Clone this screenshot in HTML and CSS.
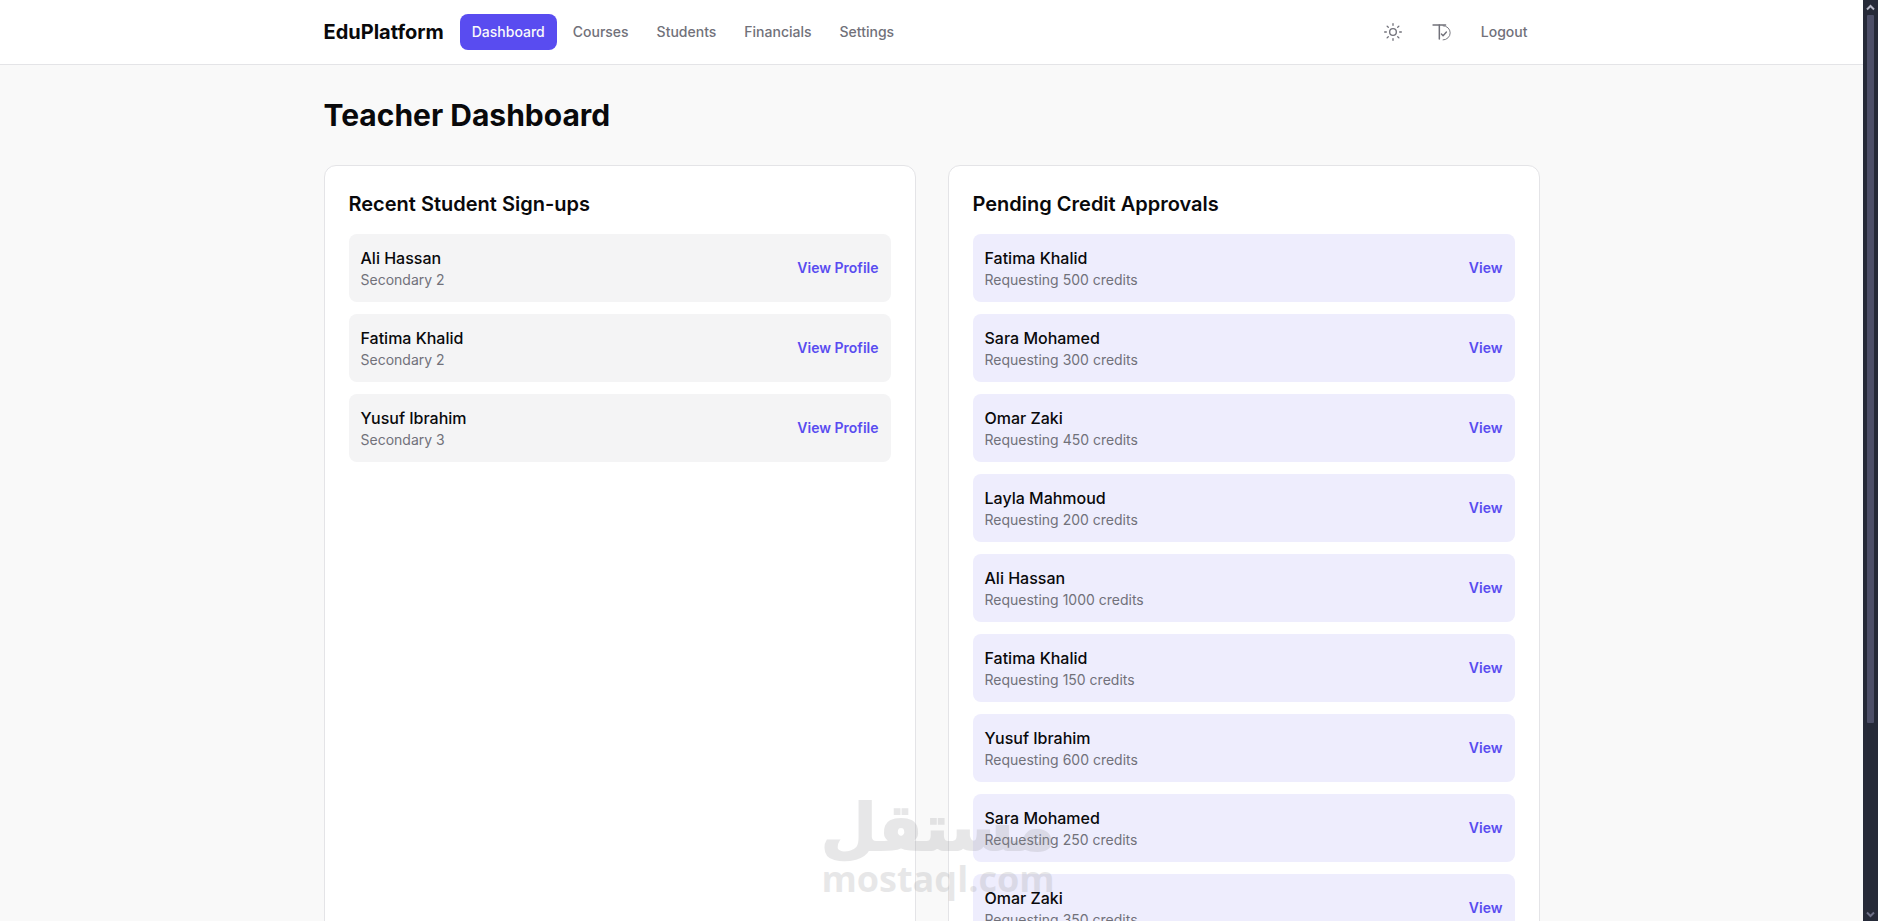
FILE: index.html
```html
<!DOCTYPE html>
<html lang="en">
<head>
<meta charset="utf-8">
<title>EduPlatform</title>
<link rel="stylesheet" href="styles.css">
</head>
<body>
<div class="viewport">
  <div class="page">
    <header class="nav">
      <div class="nav-inner">
        <div class="nav-left">
          <span class="logo">EduPlatform</span>
          <nav class="links">
            <a class="link active">Dashboard</a>
            <a class="link">Courses</a>
            <a class="link">Students</a>
            <a class="link">Financials</a>
            <a class="link">Settings</a>
          </nav>
        </div>
        <div class="nav-right">
          <span class="icon-btn">
            <svg class="icon" viewBox="0 0 24 24" fill="none" stroke="currentColor" stroke-width="1.6" stroke-linecap="round" stroke-linejoin="round"><circle cx="12" cy="12" r="4"/><path d="M12 2v2"/><path d="M12 20v2"/><path d="m4.93 4.93 1.41 1.41"/><path d="m17.66 17.66 1.41 1.41"/><path d="M2 12h2"/><path d="M20 12h2"/><path d="m6.34 17.66-1.41 1.41"/><path d="m19.07 4.93-1.41 1.41"/></svg>
          </span>
          <span class="icon-btn">
            <svg class="icon" viewBox="0 0 24 24" fill="none" stroke="currentColor" stroke-width="1.8" stroke-linecap="round" stroke-linejoin="round"><path d="M2.5 3.5h15"/><path d="M10 3.5v17"/><path d="M14.5 4.5a8.5 8.5 0 0 1 0 17" stroke-width="1.1"/><path d="m12.5 14.5 2 2 4-4.5" stroke-width="1.7"/></svg>
          </span>
          <a class="link">Logout</a>
        </div>
      </div>
    </header>
    <main class="main">
      <h1 class="title">Teacher Dashboard</h1>
      <div class="grid">
        <section class="card">
          <h2 class="card-title">Recent Student Sign-ups</h2>
          <ul class="list">
            <li class="row"><div><p class="name">Ali Hassan</p><p class="sub">Secondary 2</p></div><a class="action">View Profile</a></li>
            <li class="row"><div><p class="name">Fatima Khalid</p><p class="sub">Secondary 2</p></div><a class="action">View Profile</a></li>
            <li class="row"><div><p class="name">Yusuf Ibrahim</p><p class="sub">Secondary 3</p></div><a class="action">View Profile</a></li>
          </ul>
        </section>
        <section class="card">
          <h2 class="card-title">Pending Credit Approvals</h2>
          <ul class="list">
            <li class="row pending"><div><p class="name">Fatima Khalid</p><p class="sub">Requesting 500 credits</p></div><a class="action">View</a></li>
            <li class="row pending"><div><p class="name">Sara Mohamed</p><p class="sub">Requesting 300 credits</p></div><a class="action">View</a></li>
            <li class="row pending"><div><p class="name">Omar Zaki</p><p class="sub">Requesting 450 credits</p></div><a class="action">View</a></li>
            <li class="row pending"><div><p class="name">Layla Mahmoud</p><p class="sub">Requesting 200 credits</p></div><a class="action">View</a></li>
            <li class="row pending"><div><p class="name">Ali Hassan</p><p class="sub">Requesting 1000 credits</p></div><a class="action">View</a></li>
            <li class="row pending"><div><p class="name">Fatima Khalid</p><p class="sub">Requesting 150 credits</p></div><a class="action">View</a></li>
            <li class="row pending"><div><p class="name">Yusuf Ibrahim</p><p class="sub">Requesting 600 credits</p></div><a class="action">View</a></li>
            <li class="row pending"><div><p class="name">Sara Mohamed</p><p class="sub">Requesting 250 credits</p></div><a class="action">View</a></li>
            <li class="row pending"><div><p class="name">Omar Zaki</p><p class="sub">Requesting 350 credits</p></div><a class="action">View</a></li>
          </ul>
        </section>
      </div>
    </main>
  </div>
  <div class="scrollbar">
    <svg class="arrow" viewBox="0 0 15 15"><path d="M4 9.5 7.5 6l3.5 3.5" fill="none" stroke="#b6b7c6" stroke-width="2"/></svg>
    <div class="track"><div class="thumb"></div></div>
    <svg class="arrow" viewBox="0 0 15 15"><path d="M4 6.5 7.5 10 11 6.5" fill="none" stroke="#6d6f86" stroke-width="2"/></svg>
  </div>
  <div class="watermark">
    <span class="wm-ar" dir="rtl">مستقل</span>
    <span class="wm-en">mostaql.com</span>
  </div>
</div>
</body>
</html>
```
FILE: styles.css
```css
* { box-sizing: border-box; }
html, body { margin: 0; padding: 0; height: 100%; overflow: hidden; }
body { font-family: Inter, "Liberation Sans", sans-serif; color: #09090b; background: #f9f9f9; }
p, h1, h2, ul { margin: 0; padding: 0; }
ul { list-style: none; }

.viewport { position: relative; display: flex; height: 100vh; overflow: hidden; }
.page { flex: 1; min-width: 0; overflow: hidden; }

.nav { height: 65px; background: #fff; border-bottom: 1px solid #e4e4e7; }
.nav-inner { max-width: 1280px; height: 64px; margin: 0 auto; padding: 0 32px; display: flex; align-items: center; justify-content: space-between; }
.nav-left { display: flex; align-items: center; gap: 16px; }
.logo { font-size: 20px; line-height: 28px; font-weight: 700; }
.links { display: flex; align-items: center; gap: 4px; }
.link { display: block; padding: 8px 12px; border-radius: 8px; font-size: 14px; line-height: 20px; font-weight: 500; color: #71717a; }
.link.active { background: #594cf0; color: #fafafa; }
.nav-right { display: flex; align-items: center; gap: 8px; }
.icon-btn { width: 40px; height: 40px; display: flex; align-items: center; justify-content: center; color: #71717a; }
.icon { width: 20px; height: 20px; }

.main { max-width: 1280px; margin: 0 auto; padding: 32px; }
.title { font-size: 30px; line-height: 36px; font-weight: 700; margin-bottom: 32px; }
.grid { display: grid; grid-template-columns: 1fr 1fr; gap: 32px; }
.card { background: #fff; border: 1px solid #e4e4e7; border-radius: 12px; padding: 24px; }
.card-title { font-size: 20px; line-height: 28px; font-weight: 600; margin-bottom: 16px; }
.list { display: flex; flex-direction: column; gap: 12px; }
.row { display: flex; align-items: center; justify-content: space-between; padding: 12px; border-radius: 8px; background: #f4f4f5; }
.row.pending { background: #eeedfd; }
.name { font-size: 16px; line-height: 24px; font-weight: 500; }
.sub { font-size: 14px; line-height: 20px; color: #71717a; }
.action { font-size: 14px; line-height: 20px; font-weight: 600; color: #594cf0; }

.scrollbar { flex: none; width: 15px; height: 100%; background: #262a38; display: flex; flex-direction: column; }
.arrow { flex: none; width: 15px; height: 15px; display: block; }
.track { flex: 1; padding: 0 4px; }
.thumb { height: 708px; background: #4d4f68; border-radius: 1px; }

.watermark { position: absolute; left: 822px; top: 798px; width: 232px; display: flex; flex-direction: column; align-items: center; color: #8c8c90; opacity: 0.2; pointer-events: none; }
.wm-ar { font-family: "DejaVu Sans", sans-serif; font-size: 64px; line-height: 61px; font-weight: 700; -webkit-text-stroke: 2px #8c8c90; }
.wm-en { font-family: "Open Sans", sans-serif; font-size: 36px; line-height: 40px; font-weight: 700; }
```
